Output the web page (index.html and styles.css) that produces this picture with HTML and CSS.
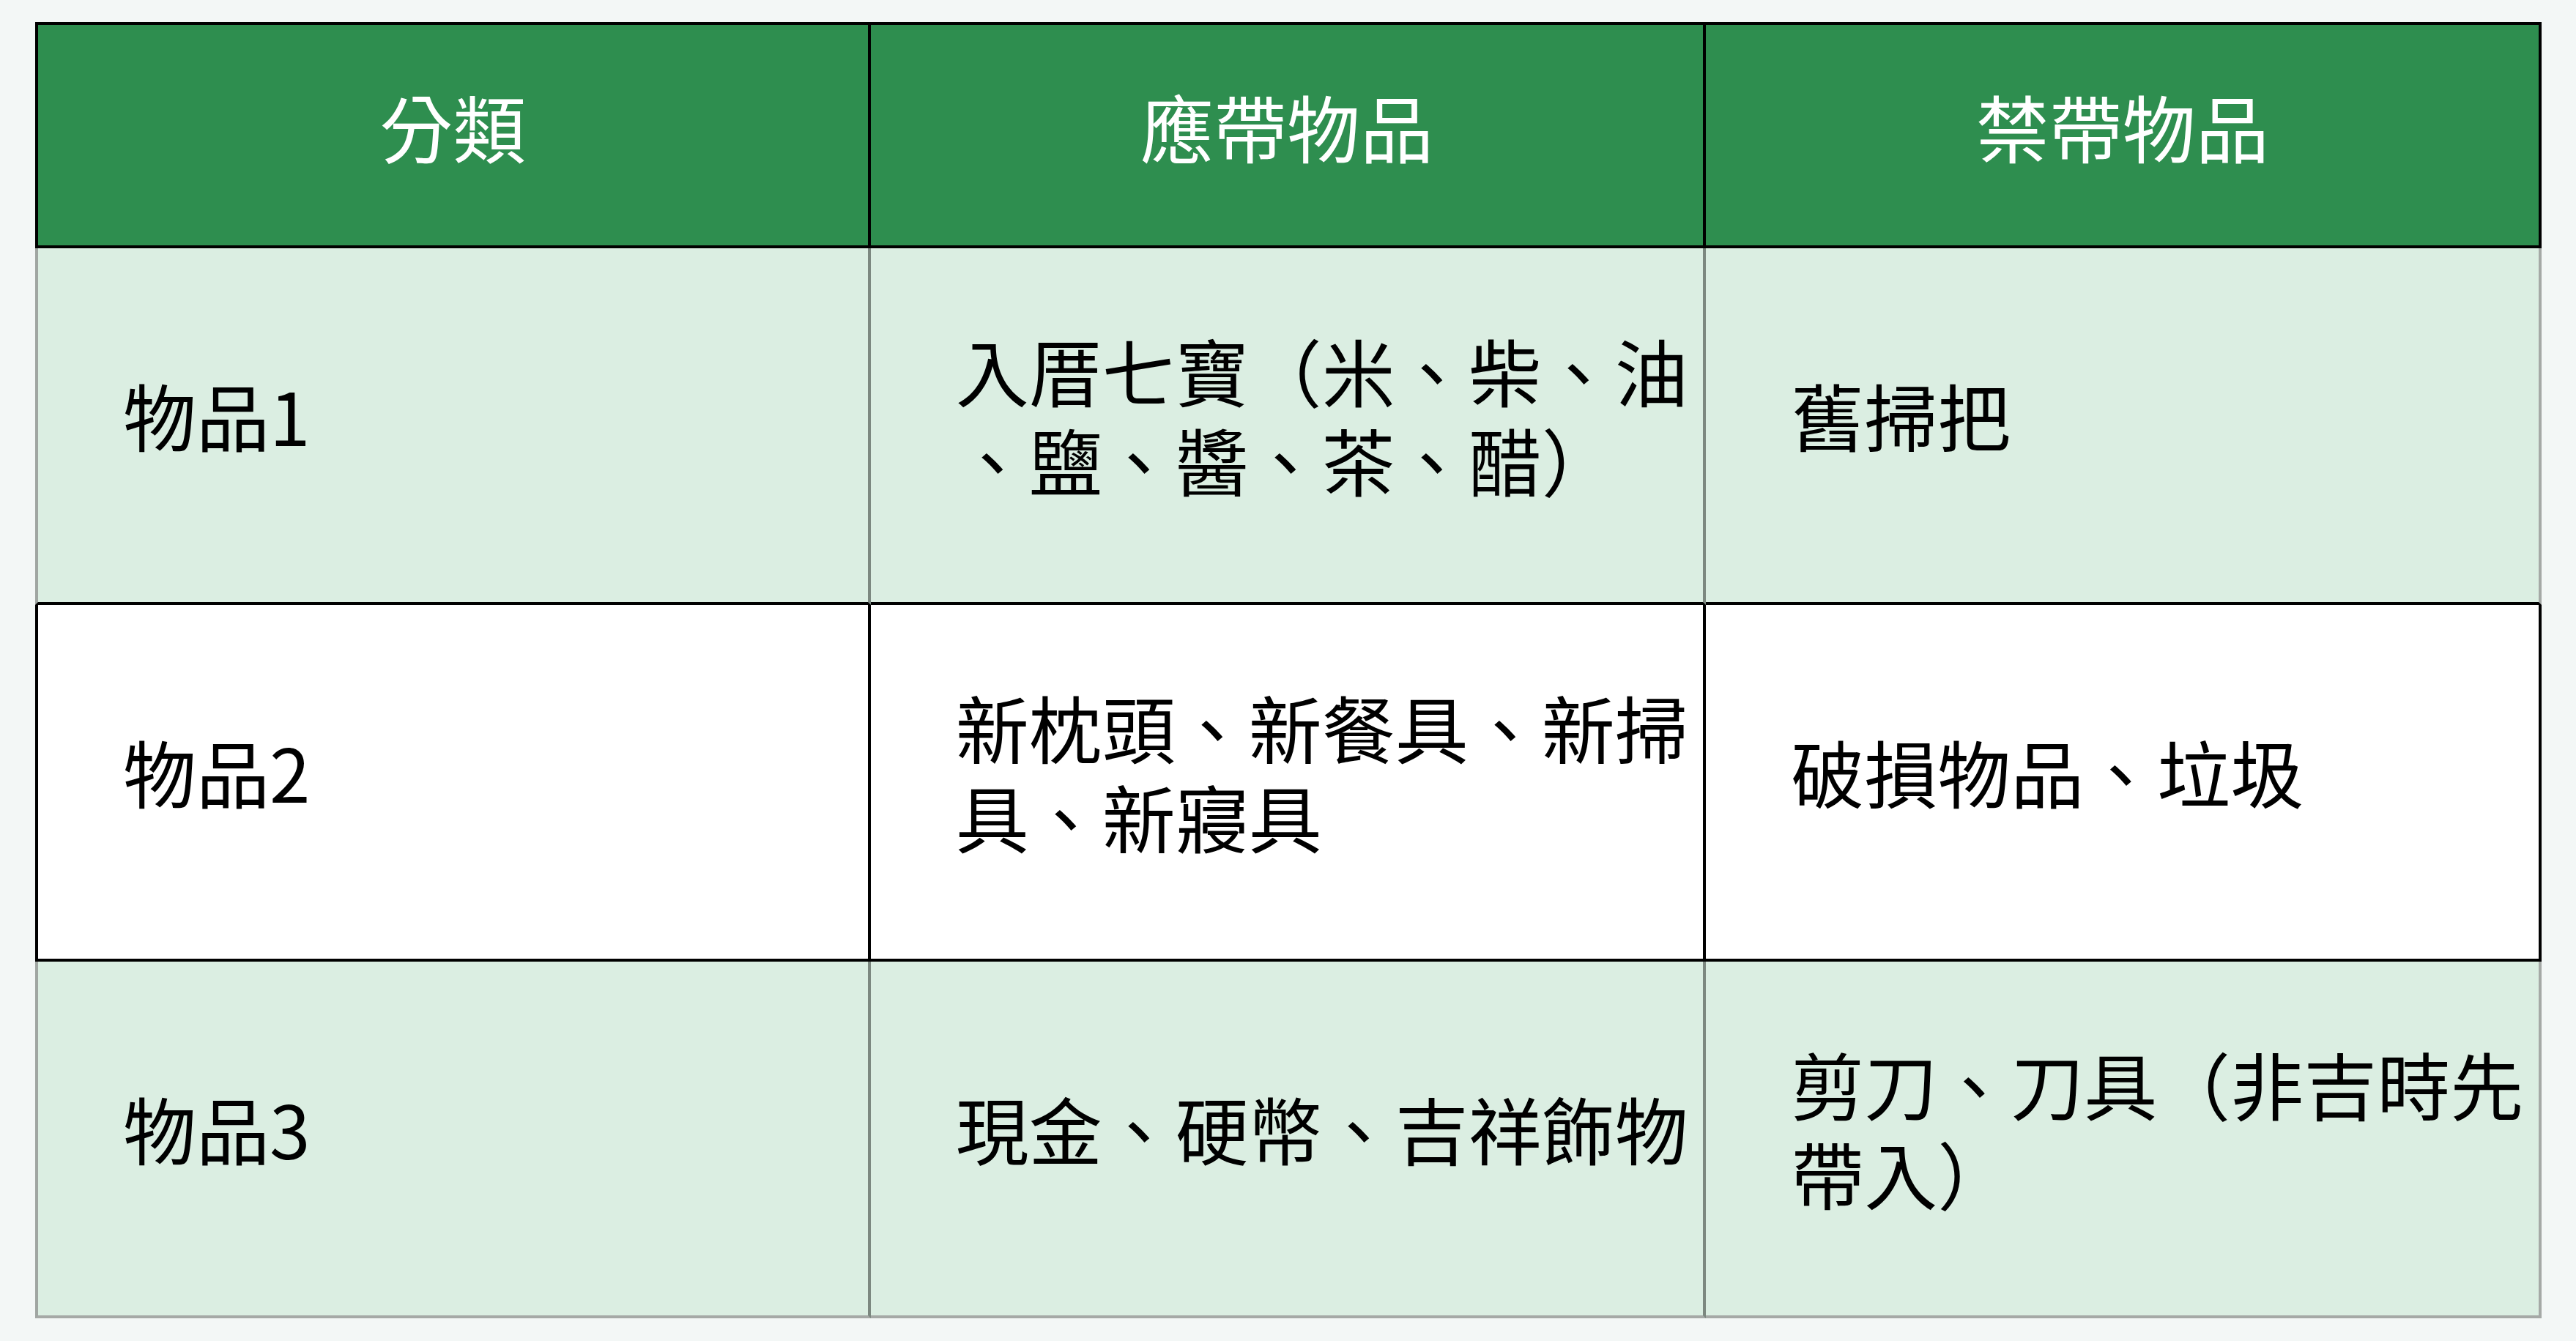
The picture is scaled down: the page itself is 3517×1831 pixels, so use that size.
FILE: index.html
```html
<!DOCTYPE html>
<html lang="zh-Hant">
<head>
<meta charset="utf-8">
<title>入厝物品</title>
<link rel="stylesheet" href="styles.css">
</head>
<body>
<table class="items">
  <thead>
    <tr class="head-row">
      <th class="first">分類</th>
      <th>應帶物品</th>
      <th>禁帶物品</th>
    </tr>
  </thead>
  <tbody>
    <tr class="tint">
      <td class="first">物品1</td>
      <td>入厝七寶（米、柴、油、鹽、醬、茶、醋）</td>
      <td>舊掃把</td>
    </tr>
    <tr class="plain">
      <td class="first">物品2</td>
      <td>新枕頭、新餐具、新掃具、新寢具</td>
      <td>破損物品、垃圾</td>
    </tr>
    <tr class="tint last">
      <td class="first">物品3</td>
      <td>現金、硬幣、吉祥飾物</td>
      <td>剪刀、刀具（非吉時先帶入）</td>
    </tr>
  </tbody>
</table>
</body>
</html>
```
FILE: styles.css
```css
html, body {
  margin: 0;
  background: #f3f7f6;
}
body {
  padding: 30px 47px 0 48px;
  font-family: "Noto Sans CJK TC", "Noto Sans", sans-serif;
}
.items {
  width: 3422px;
  table-layout: fixed;
  border-collapse: separate;
  border-spacing: 0;
  font-size: 100px;
  line-height: 122px;
  color: #000;
}
.items th,
.items td {
  padding: 0 6px 30px 116px;
  vertical-align: middle;
  text-align: left;
  line-break: anywhere;
  font-weight: 400;
}
.head-row {
  height: 309px;
}
.items th {
  background: #2e8e4f;
  color: #fff;
  text-align: center;
  padding: 0 0 26px 0;
  border-top: 4px solid #000;
  border-right: 4px solid #000;
  border-bottom: 4px solid #000;
}
.items th.first {
  border-left: 4px solid #000;
}
.items tbody tr {
  height: 487px;
}
.tint td {
  background: #dbeee2;
  border-right: 4px solid #7c8880;
  border-bottom: 4px solid #000;
}
.tint td.first {
  border-left: 4px solid #a0a6a2;
}
.tint td:last-child {
  border-right-color: #a5a9a6;
}
.plain td {
  background: #fff;
  border-right: 4px solid #000;
  border-bottom: 4px solid #000;
}
.plain td.first {
  border-left: 4px solid #000;
}
.tint.last td {
  border-bottom-color: #a5a9a6;
}
```
